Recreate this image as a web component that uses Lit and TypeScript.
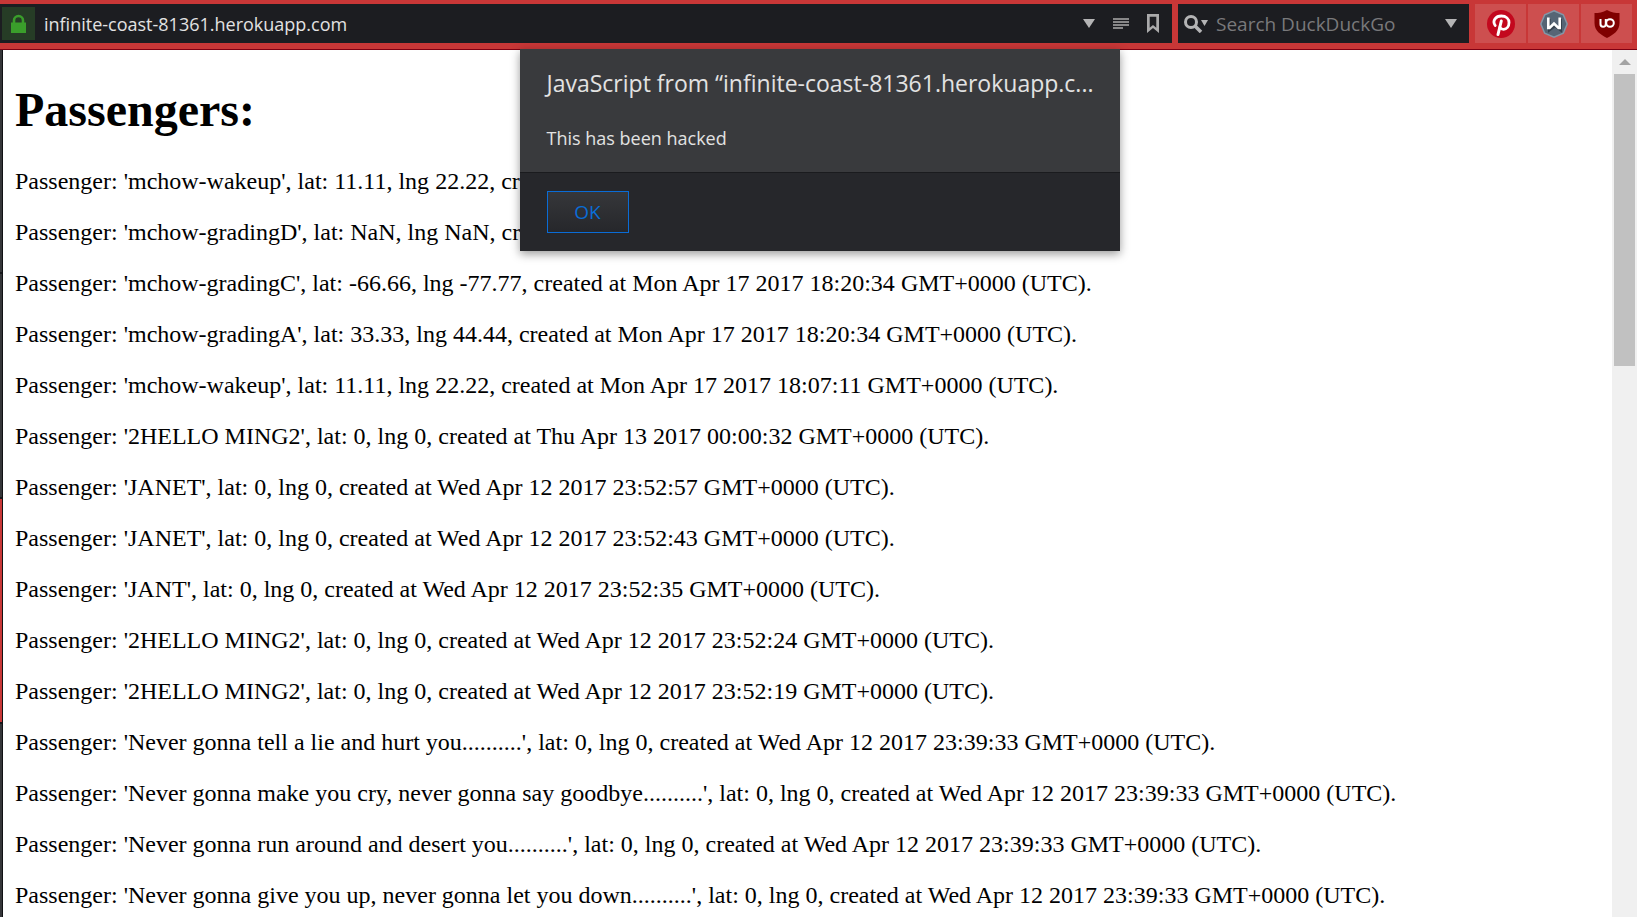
import { LitElement, html, css, svg } from "lit";
import { customElement } from "lit/decorators.js";

interface Passenger {
  name: string;
  lat: string;
  lng: string;
  created: string;
}

const p = (name: string, lat: string, lng: string, created: string): Passenger => ({ name, lat, lng, created });

const PASSENGERS: Passenger[] = [
  p("mchow-wakeup", "11.11", "22.22", "Mon Apr 17 2017 18:20:34"),
  p("mchow-gradingD", "NaN", "NaN", "Mon Apr 17 2017 18:20:34"),
  p("mchow-gradingC", "-66.66", "-77.77", "Mon Apr 17 2017 18:20:34"),
  p("mchow-gradingA", "33.33", "44.44", "Mon Apr 17 2017 18:20:34"),
  p("mchow-wakeup", "11.11", "22.22", "Mon Apr 17 2017 18:07:11"),
  p("2HELLO MING2", "0", "0", "Thu Apr 13 2017 00:00:32"),
  p("JANET", "0", "0", "Wed Apr 12 2017 23:52:57"),
  p("JANET", "0", "0", "Wed Apr 12 2017 23:52:43"),
  p("JANT", "0", "0", "Wed Apr 12 2017 23:52:35"),
  p("2HELLO MING2", "0", "0", "Wed Apr 12 2017 23:52:24"),
  p("2HELLO MING2", "0", "0", "Wed Apr 12 2017 23:52:19"),
  p("Never gonna tell a lie and hurt you..........", "0", "0", "Wed Apr 12 2017 23:39:33"),
  p("Never gonna make you cry, never gonna say goodbye..........", "0", "0", "Wed Apr 12 2017 23:39:33"),
  p("Never gonna run around and desert you..........", "0", "0", "Wed Apr 12 2017 23:39:33"),
  p("Never gonna give you up, never gonna let you down..........", "0", "0", "Wed Apr 12 2017 23:39:33"),
];

const icon = (w: number, h: number, body: unknown) =>
  html`<svg width=${w} height=${h} viewBox="0 0 ${w} ${h}" aria-hidden="true">${body}</svg>`;

const lock = icon(15, 19, svg`
  <path d="M3 9V6.500a4.500 4.500 0 0 1 9 0V9" fill="none" stroke="#3a9e2b" stroke-width="2.600"/>
  <path d="M0 8.500h15V19H0z" fill="#3a9e2b"/>`);
const caret = icon(12, 9, svg`<path d="M0 0h12L6 9z" fill="#b4b4b5"/>`);
const reader = icon(16, 11, svg`<path d="M0 1h16M0 4h16M0 7h16M0 10h10" stroke="#aaaaab" stroke-width="1.500"/>`);
const bookmark = icon(12, 19, svg`<path fill-rule="evenodd" d="M0 0h12v19l-6-5-6 5zM2.700 2.700v11L6 11l3.300 2.700v-11z" fill="#aaaaab"/>`);
const search = icon(24, 18, svg`
  <circle cx="7" cy="7" r="5.500" fill="none" stroke="#b4b4b5" stroke-width="3"/>
  <path d="M11 11l6 6" stroke="#b4b4b5" stroke-width="3.500"/>
  <path d="M17 5h7l-3.500 6z" fill="#b4b4b5"/>`);
const pinterest = icon(28, 28, svg`
  <circle cx="14" cy="14" r="14" fill="#c3081e"/>
  <path d="M11 24.500L14.300 11" fill="none" stroke="#fff" stroke-width="3" stroke-linecap="round"/>
  <path d="M8.200 15.500C4.800 10.500 9 6 14.300 6c5 0 7.700 3 7.700 6.500 0 4-2.400 6.800-5.400 6.800-1.800 0-3-.9-3.600-2" fill="none" stroke="#fff" stroke-width="2.800" stroke-linecap="round"/>`);
const octagon = icon(28, 28, svg`
  <path d="M14 0.800l9.300 3.900L27.200 14l-3.900 9.300L14 27.200l-9.300-3.900L.8 14l3.900-9.300z" fill="#566575" stroke="#8496a7" stroke-width="1.500"/>
  <path d="M8.300 8v11.200L14 15l5.700 4.200V8" fill="none" stroke="#36424e" stroke-width="2.600" transform="translate(1 1)"/>
  <path d="M8.300 7.500v10.500h1.200L14 13.500l4.500 4.500h1.200V7.500" fill="none" stroke="#fff" stroke-width="2.600"/>`);
const shield = icon(26, 28, svg`
  <path d="M13 0c4 2.500 8.500 3 12.500 3v10c0 8-6 11.500-12.500 15C6.500 24.500.5 21 .5 13V3C4.500 3 9 2.500 13 0z" fill="#800000"/>
  <path d="M6.500 9v5q0 2.800 2.600 2.800t2.700-2.800V9" fill="none" stroke="#fff" stroke-width="2"/>
  <circle cx="16" cy="13" r="3.800" fill="none" stroke="#fff" stroke-width="2"/>`);

@customElement("app-root")
export class AppRoot extends LitElement {
  static styles = css`
    :host {
      display: flex;
      flex-direction: column;
      height: 100vh;
      overflow: hidden;
      background: #fff;
      color: #000;
      font-family: "Liberation Serif", "Times New Roman", serif;
    }
    * { box-sizing: border-box; }
    svg { display: block; flex: none; }
    button {
      margin: 0;
      padding: 0;
      border: 0;
      background: none;
      font: inherit;
      display: flex;
      align-items: center;
      justify-content: center;
    }
    .toolbar {
      flex: none;
      display: flex;
      gap: 6px;
      height: 50px;
      padding: 4px 5px 6px 0;
      background: #c83737;
      border-bottom: 1px solid #7d0012;
      font-family: "Open Sans", sans-serif;
      font-size: 19px;
    }
    .field {
      display: flex;
      align-items: center;
      background: #1c1d21;
    }
    .address { flex: 1; padding: 0 13px 0 2px; gap: 18px; font-size: 18px; }
    .search { width: 291px; padding: 0 12px 0 6px; gap: 8px; }
    .lock { width: 33px; height: 33px; background: #263c26; }
    input {
      flex: 1;
      min-width: 0;
      padding: 0;
      border: 0;
      outline: 0;
      background: none;
      font: inherit;
      color: #e2e2e2;
    }
    .address input { margin-left: -9px; }
    input::placeholder { color: #79797b; opacity: 1; }
    .extensions { display: flex; gap: 2px; }
    .extension { width: 51px; background: #cd4f4f; }
    .view { flex: 1; min-height: 0; display: flex; position: relative; }
    .edge {
      flex: none;
      width: 3px;
      display: grid;
      grid-template-rows: 224px 225px 225px 1fr;
      border-right: 1px solid #101114;
      background: #353639;
    }
    .edge span { border-bottom: 2px solid #17181b; }
    .edge .active { background: #c83737; }
    .page { flex: 1; min-width: 0; overflow: hidden; padding: 0 12px; font-size: 24px; line-height: 27px; }
    h1 { margin: 32px 0 30px; font-size: 48px; line-height: 56px; }
    p { margin: 0 0 24px; }
    .scrollbar {
      flex: none;
      width: 25px;
      padding: 9px 2px 0;
      display: flex;
      flex-direction: column;
      gap: 9px;
      align-items: center;
      background: #f0f0f0;
    }
    .thumb { width: 100%; height: 34%; background: #c1c1c1; }
    .dialog {
      position: absolute;
      top: -1px;
      left: calc(50% + 1px);
      transform: translateX(-50%);
      width: 600px;
      margin: 0;
      padding: 0;
      border: 0;
      color: #e2e2e2;
      background: #393a3d;
      font-family: "Open Sans", sans-serif;
      box-shadow: 0 3px 9px rgba(0, 0, 0, 0.4);
    }
    .message { padding: 18px 27px 20px; }
    h2 {
      margin: 0 0 25px;
      font-size: 23px;
      font-weight: 400;
      line-height: 32px;
      white-space: nowrap;
    }
    .message p { margin: 0; font-size: 18px; line-height: 28px; }
    .actions { padding: 18px 27px; background: #26272b; border-top: 1px solid #1a1b1e; }
    .ok {
      width: 82px;
      height: 42px;
      border: 1px solid #0a6cd6;
      color: #0a6cd6;
      background: linear-gradient(#36373a, #26272b);
      font-size: 19px;
    }
  `;

  render() {
    return html`
      <header class="toolbar">
        <div class="field address">
          <button class="lock" aria-label="Site information">${lock}</button>
          <input aria-label="Address" value="infinite-coast-81361.herokuapp.com" />
          <button aria-label="History">${caret}</button>
          <button aria-label="Reader view">${reader}</button>
          <button aria-label="Bookmark">${bookmark}</button>
        </div>
        <div class="field search">
          <button aria-label="Search engine">${search}</button>
          <input aria-label="Search" placeholder="Search DuckDuckGo" />
          <button aria-label="Recent searches">${caret}</button>
        </div>
        <div class="extensions">
          <button class="extension" aria-label="Pinterest">${pinterest}</button>
          <button class="extension" aria-label="Windscribe">${octagon}</button>
          <button class="extension" aria-label="uBlock Origin">${shield}</button>
        </div>
      </header>
      <div class="view">
        <div class="edge"><span></span><span></span><span class="active"></span></div>
        <main class="page">
          <h1>Passengers:</h1>
          ${PASSENGERS.map((x) => html`<p>Passenger: '${x.name}', lat: ${x.lat}, lng ${x.lng}, created at ${x.created} GMT+0000 (UTC).</p>`)}
        </main>
        <div class="scrollbar">
          ${icon(12, 6, svg`<path d="M0 6h12L6 0z" fill="#a3a3a3"/>`)}
          <div class="thumb"></div>
        </div>
        <section class="dialog" role="alertdialog" aria-labelledby="title" aria-describedby="text">
          <div class="message">
            <h2 id="title">JavaScript from “infinite-coast-81361.herokuapp.c...</h2>
            <p id="text">This has been hacked</p>
          </div>
          <div class="actions"><button class="ok">OK</button></div>
        </section>
      </div>
    `;
  }
}
